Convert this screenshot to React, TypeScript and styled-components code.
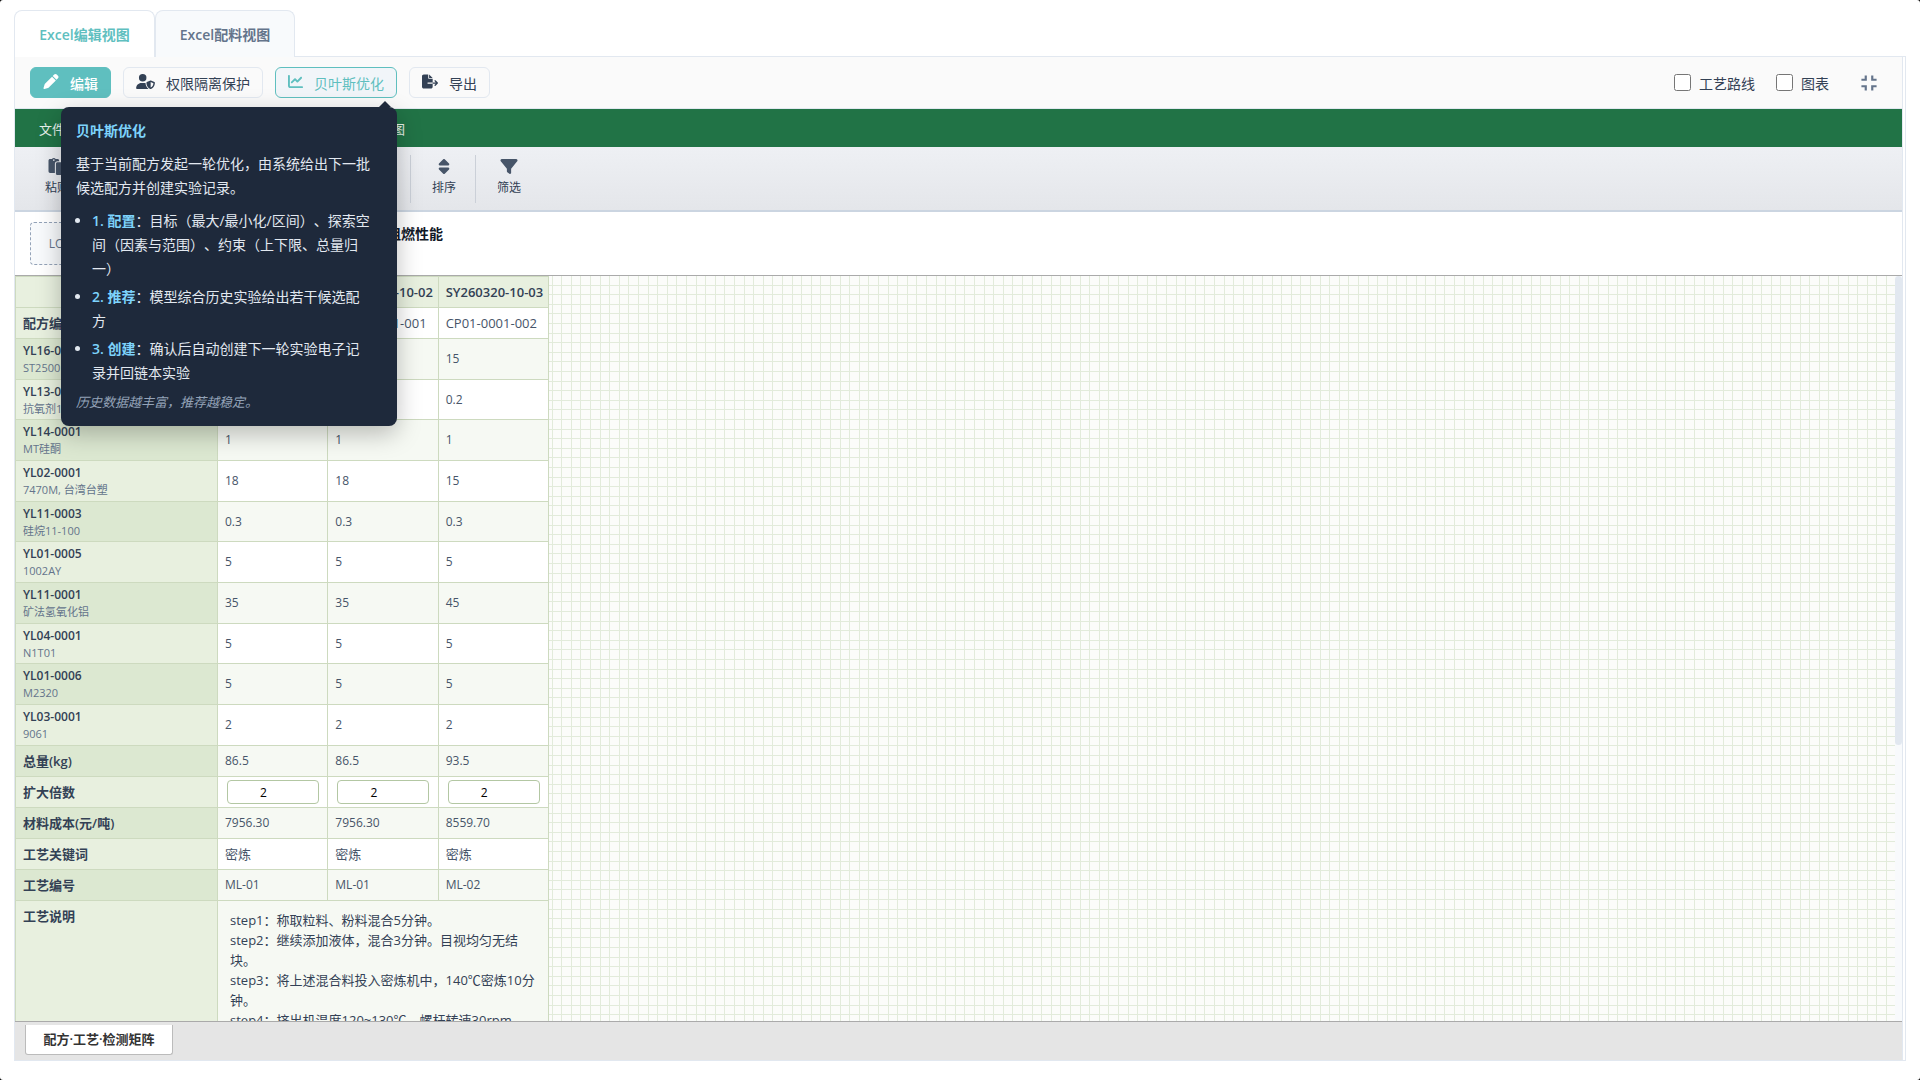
import React, { useState } from 'react';
import styled, { createGlobalStyle, css } from 'styled-components';
import {
  FaAlignCenter,
  FaAlignLeft,
  FaBold,
  FaChartLine,
  FaCopy,
  FaFileExport,
  FaFilter,
  FaItalic,
  FaPaste,
  FaPen,
  FaScissors,
  FaSort,
  FaUserShield,
} from 'react-icons/fa6';
import { MdFullscreenExit } from 'react-icons/md';

const GlobalStyle = createGlobalStyle`
  * {
    box-sizing: border-box;
  }
  html {
    background: #000;
  }
  body {
    margin: 0;
    font-family: 'Open Sans', 'Noto Sans CJK SC', sans-serif;
    font-size: 14px;
    color: #334155;
    text-spacing-trim: space-all;
  }
  button, input {
    font-family: inherit;
  }
`;

const Page = styled.div`
  display: flex;
  flex-direction: column;
  height: 100vh;
  padding: 10px 14px 19px;
  background: #fff;
  border-radius: 3px;
`;

const Tabs = styled.nav`
  display: flex;
  height: 47px;
  box-shadow: inset 0 -1px 0 #e2e8f0;
`;

const Tab = styled.button<{ $active?: boolean }>`
  width: 140px;
  border: 1px solid #e2e8f0;
  border-bottom: none;
  border-radius: 8px 8px 0 0;
  background: ${({ $active }) => ($active ? '#fff' : '#f8fafc')};
  color: ${({ $active }) => ($active ? '#5fbfbf' : '#64748b')};
  font-size: 14px;
  font-weight: 600;
  cursor: pointer;

  &:first-child {
    width: 141px;
  }
`;

const Frame = styled.div`
  flex: 1;
  min-height: 0;
  display: flex;
  padding-right: 2px;
  border: 1px solid #e2e8f0;
  border-top: none;
`;

const Panel = styled.main`
  flex: 1;
  min-width: 0;
  display: flex;
  flex-direction: column;
  border-right: 1px solid #e2e8f0;
`;

const Toolbar = styled.div`
  display: flex;
  align-items: center;
  gap: 12px;
  height: 52px;
  padding: 0 15px;
  background: #fafafa;
  border-bottom: 1px solid #e2e8f0;
`;

const ToolButton = styled.button<{ $variant?: 'primary' | 'active'; $icon: number }>`
  display: flex;
  align-items: center;
  gap: 11px;
  height: 31px;
  padding: 0 12px;
  border: 1px solid #e2e8f0;
  border-radius: 6px;
  background: #fafafa;
  color: #334155;
  font-size: 14px;
  cursor: pointer;

  svg {
    width: ${({ $icon }) => $icon}px;
    height: 15px;
    margin-bottom: 2px;
  }

  ${({ $variant }) =>
    $variant === 'primary' &&
    css`
      background: #5fbfbf;
      border-color: #5fbfbf;
      color: #fff;
      font-weight: 500;
    `}

  ${({ $variant }) =>
    $variant === 'active' &&
    css`
      background: #f1f5f9;
      border-color: #5fbfbf;
      color: #5fbfbf;
    `}
`;

const TipAnchor = styled.div`
  position: relative;
`;

const Tip = styled.div`
  position: absolute;
  top: 40px;
  right: 0;
  z-index: 10;
  width: 336px;
  padding: 12px 15px;
  border-radius: 8px;
  background: #1e293b;
  color: #e2e8f0;
  font-size: 14px;
  line-height: 24px;
  box-shadow: 0 8px 24px rgba(0, 0, 0, 0.25);

  &::before {
    content: '';
    position: absolute;
    top: -6px;
    right: 6px;
    border: 6px solid transparent;
    border-top: none;
    border-bottom-color: #1e293b;
  }

  strong {
    color: #7dd3fc;
    font-weight: 600;
  }
`;

const TipTitle = styled.h4`
  margin: 0 0 9px;
  color: #7dd3fc;
  font-size: 14px;
  font-weight: 700;
`;

const TipText = styled.p`
  margin: 0;
`;

const TipList = styled.ul`
  margin: 9px 0 5px;
  padding: 0 10px 0 16px;

  li + li {
    margin-top: 4px;
  }
`;

const TipNote = styled.em`
  color: #94a3b8;
  font-size: 13px;
`;

const Options = styled.div`
  display: flex;
  align-items: center;
  gap: 21px;
  margin-left: auto;
`;

const Option = styled.label`
  display: flex;
  align-items: center;
  gap: 8px;

  input {
    width: 17px;
    height: 17px;
    margin: 0;
  }
`;

const IconButton = styled.button`
  display: flex;
  padding: 4px 5px 4px 6px;
  border: none;
  background: none;
  color: #64748b;
  font-size: 26px;
  cursor: pointer;
`;

const MenuBar = styled.div`
  display: flex;
  align-items: center;
  gap: 42px;
  height: 38px;
  padding: 0 24px;
  background: #217346;
`;

const MenuItem = styled.button`
  padding: 0;
  border: none;
  background: none;
  color: #e8f1ec;
  font-size: 13px;
  cursor: pointer;
`;

const Ribbon = styled.div`
  display: flex;
  align-items: center;
  height: 65px;
  padding: 0 9px;
  background: linear-gradient(#eef0f4, #e4e6ea);
  border-bottom: 2px solid #cbd5e1;
`;

const RibbonGroup = styled.div`
  display: flex;
  height: 48px;
  padding: 0 7px 0 9px;

  &:not(:last-child) {
    border-right: 1px solid #cbd0d8;
  }
`;

const RibbonItem = styled.button`
  display: flex;
  flex-direction: column;
  align-items: center;
  gap: 4px;
  width: 48px;
  padding: 3px 0 0;
  border: none;
  background: none;
  color: #334155;
  font-size: 12px;
  line-height: 18px;
  white-space: nowrap;
  cursor: pointer;

  svg {
    width: 18px;
    height: 17px;
    color: #475569;
  }
`;

const SheetHead = styled.header`
  display: flex;
  gap: 20px;
  height: 64px;
  padding: 10px 15px;
  border-bottom: 1px solid #aaa;
`;

const Logo = styled.div`
  display: flex;
  align-items: center;
  justify-content: center;
  width: 71px;
  height: 43px;
  border: 1px dashed #94a3b8;
  border-radius: 4px;
  background: #f8fafc;
  color: #64748b;
  font-size: 12px;
`;

const SheetTitle = styled.h1`
  margin: 0;
  color: #111827;
  font-size: 14px;
  font-weight: 600;
  line-height: 24px;
`;

const SheetArea = styled.div`
  flex: 1;
  min-height: 0;
  display: flex;
`;

const lines =
  'transparent 0 9px, #e2ebdb 9px 10px, transparent 10px 18px, #e2ebdb 18px 19px, transparent 19px 28px, #e2ebdb 28px 29px, transparent 29px 37px, #e2ebdb 37px 38px, transparent 38px 47px, #e2ebdb 47px 48px';

const Sheet = styled.div`
  flex: 1;
  min-width: 0;
  overflow-y: auto;
  scrollbar-width: none;
  background:
    repeating-linear-gradient(90deg, ${lines}),
    repeating-linear-gradient(180deg, ${lines}),
    #fbfcfa;
`;

const ScrollTrack = styled.div`
  width: 7px;
  background: #f8fafc;
`;

const ScrollThumb = styled.div`
  height: 63%;
  border-radius: 4px;
  background: #e2e8f0;
`;

const Matrix = styled.table`
  width: 534px;
  table-layout: fixed;
  border-collapse: collapse;
  background: #fff;
  font-size: 12px;
  line-height: 18px;

  th, td {
    height: 31px;
    padding: 0 7px;
    border: 1px solid #cddabf;
    text-align: left;
  }

  thead th {
    background: #e8f0df;
    font-size: 13px;
    font-weight: 600;
    white-space: nowrap;
  }

  td {
    color: #475569;
  }
`;

const Row = styled.tr<{ $shade?: boolean; $height: number }>`
  height: ${({ $height }) => $height}px;
  background: ${({ $shade }) => ($shade ? '#f6f9f3' : '#fff')};

  th {
    background: ${({ $shade }) => ($shade ? '#dce8d1' : '#e8f0df')};
    font-size: 13px;
    font-weight: 600;
  }
`;

const Code = styled.div`
  font-size: 12px;
  line-height: 18px;
`;

const Sub = styled.div`
  color: #64748b;
  font-size: 11px;
  font-weight: 400;
  line-height: 16px;
`;

const Word = styled.span`
  font-size: 13px;
`;

const ScaleInput = styled.input`
  display: block;
  width: 92px;
  height: 24px;
  margin: 0 0 0 2px;
  padding: 0 4px 0 0;
  border: 1px solid #b3c7a3;
  border-radius: 4px;
  background: #fff;
  color: #000;
  font-size: 12px;
  text-align: center;
`;

const StepHead = styled.th`
  && {
    padding-top: 6px;
    vertical-align: top;
  }
`;

const StepCell = styled.td`
  && {
    padding: 9px 10px 9px 12px;
    background: #f6f9f3;
    color: #334155;
    font-size: 13px;
    line-height: 20px;
    vertical-align: top;
  }
`;

const SheetBar = styled.footer`
  display: flex;
  align-items: flex-start;
  height: 39px;
  padding: 3px 10px;
  background: #e5e5e5;
  border-top: 1px solid #aaa;
`;

const SheetTab = styled.button`
  width: 148px;
  height: 30px;
  padding: 0 0 2px;
  border: 1px solid #bbb;
  border-top: none;
  border-radius: 0 0 3px 3px;
  background: #fff;
  color: #333;
  font-size: 13px;
  font-weight: 600;
`;

const experiments = ['SY260320-10-01', 'SY260320-10-02', 'SY260320-10-03'];

const recipes = ['CP01-0001-001', 'CP01-0001-001', 'CP01-0001-002'];

const materials = [
  { code: 'YL16-0001', name: 'ST2500', values: ['15', '15', '15'] },
  { code: 'YL13-0001', name: '抗氧剂1010', values: ['0.2', '0.2', '0.2'] },
  { code: 'YL14-0001', name: 'MT硅酮', values: ['1', '1', '1'] },
  { code: 'YL02-0001', name: '7470M, 台湾台塑', values: ['18', '18', '15'] },
  { code: 'YL11-0003', name: '硅烷11-100', values: ['0.3', '0.3', '0.3'] },
  { code: 'YL01-0005', name: '1002AY', values: ['5', '5', '5'] },
  { code: 'YL11-0001', name: '矿法氢氧化铝', values: ['35', '35', '45'] },
  { code: 'YL04-0001', name: 'N1T01', values: ['5', '5', '5'] },
  { code: 'YL01-0006', name: 'M2320', values: ['5', '5', '5'] },
  { code: 'YL03-0001', name: '9061', values: ['2', '2', '2'] },
];

const steps = [
  'step1：称取粒料、粉料混合5分钟。',
  'step2：继续添加液体，混合3分钟。目视均匀无结块。',
  'step3：将上述混合料投入密炼机中，140℃密炼10分钟。',
  'step4：挤出机温度120~130℃，螺杆转速30rpm。',
];

const menus = ['文件', '开始', '插入', '公式', '数据', '视图'];

const ribbon = [
  [
    { icon: <FaPaste />, label: '粘贴' },
    { icon: <FaScissors />, label: '剪切' },
    { icon: <FaCopy />, label: '复制' },
  ],
  [
    { icon: <FaBold />, label: '加粗' },
    { icon: <FaItalic />, label: '斜体' },
  ],
  [
    { icon: <FaAlignLeft />, label: '左对齐' },
    { icon: <FaAlignCenter />, label: '居中' },
  ],
  [{ icon: <FaSort />, label: '排序' }],
  [{ icon: <FaFilter />, label: '筛选' }],
];

const BayesTip = () => (
  <Tip role="tooltip">
    <TipTitle>贝叶斯优化</TipTitle>
    <TipText>基于当前配方发起一轮优化，由系统给出下一批候选配方并创建实验记录。</TipText>
    <TipList>
      <li>
        <strong>1. 配置</strong>：目标（最大/最小化/区间）、探索空间（因素与范围）、约束（上下限、总量归一）
      </li>
      <li>
        <strong>2. 推荐</strong>：模型综合历史实验给出若干候选配方
      </li>
      <li>
        <strong>3. 创建</strong>：确认后自动创建下一轮实验电子记录并回链本实验
      </li>
    </TipList>
    <TipNote>历史数据越丰富，推荐越稳定。</TipNote>
  </Tip>
);

const RecipeTable = () => {
  const [scales, setScales] = useState([2, 2, 2]);

  const changeScale = (index: number, value: string) => {
    setScales(scales.map((s, i) => (i === index ? Number(value) : s)));
  };

  return (
    <Matrix>
      <colgroup>
        <col width={202} />
        <col />
        <col />
        <col />
      </colgroup>
      <thead>
        <tr>
          <th />
          {experiments.map((e) => (
            <th key={e}>{e}</th>
          ))}
        </tr>
      </thead>
      <tbody>
        <Row $height={31}>
          <th>配方编号</th>
          {recipes.map((r, i) => (
            <td key={i}>
              <Word>{r}</Word>
            </td>
          ))}
        </Row>
        {materials.map((m, i) => (
          <Row key={m.code} $shade={i % 2 === 0} $height={i % 3 === 1 ? 40 : 41}>
            <th>
              <Code>{m.code}</Code>
              <Sub>{m.name}</Sub>
            </th>
            {m.values.map((v, j) => (
              <td key={j}>{v}</td>
            ))}
          </Row>
        ))}
        <Row $shade $height={31}>
          <th>总量(kg)</th>
          <td>86.5</td>
          <td>86.5</td>
          <td>93.5</td>
        </Row>
        <Row $height={31}>
          <th>扩大倍数</th>
          {scales.map((s, i) => (
            <td key={i}>
              <ScaleInput
                type="number"
                aria-label={`扩大倍数 ${experiments[i]}`}
                value={s}
                onChange={(e) => changeScale(i, e.target.value)}
              />
            </td>
          ))}
        </Row>
        <Row $shade $height={31}>
          <th>材料成本(元/吨)</th>
          <td>7956.30</td>
          <td>7956.30</td>
          <td>8559.70</td>
        </Row>
        <Row $height={31}>
          <th>工艺关键词</th>
          {experiments.map((e) => (
            <td key={e}>
              <Word>密炼</Word>
            </td>
          ))}
        </Row>
        <Row $shade $height={31}>
          <th>工艺编号</th>
          <td>ML-01</td>
          <td>ML-01</td>
          <td>ML-02</td>
        </Row>
        <Row $height={31}>
          <StepHead>工艺说明</StepHead>
          <StepCell colSpan={3}>
            {steps.map((s) => (
              <div key={s}>{s}</div>
            ))}
          </StepCell>
        </Row>
      </tbody>
    </Matrix>
  );
};

const App = () => {
  const [tab, setTab] = useState('edit');
  const [showRoute, setShowRoute] = useState(false);
  const [showChart, setShowChart] = useState(false);

  return (
    <>
      <GlobalStyle />
      <Page>
        <Tabs>
          <Tab $active={tab === 'edit'} onClick={() => setTab('edit')}>
            Excel编辑视图
          </Tab>
          <Tab $active={tab === 'batch'} onClick={() => setTab('batch')}>
            Excel配料视图
          </Tab>
        </Tabs>
        <Frame>
          <Panel>
            <Toolbar>
              <ToolButton $variant="primary" $icon={16}>
                <FaPen />
                编辑
              </ToolButton>
              <ToolButton $icon={19}>
                <FaUserShield />
                权限隔离保护
              </ToolButton>
              <TipAnchor>
                <ToolButton $variant="active" $icon={15}>
                  <FaChartLine />
                  贝叶斯优化
                </ToolButton>
                <BayesTip />
              </TipAnchor>
              <ToolButton $icon={16}>
                <FaFileExport />
                导出
              </ToolButton>
              <Options>
                <Option>
                  <input type="checkbox" checked={showRoute} onChange={() => setShowRoute(!showRoute)} />
                  工艺路线
                </Option>
                <Option>
                  <input type="checkbox" checked={showChart} onChange={() => setShowChart(!showChart)} />
                  图表
                </Option>
                <IconButton aria-label="退出全屏">
                  <MdFullscreenExit />
                </IconButton>
              </Options>
            </Toolbar>
            <MenuBar>
              {menus.map((m) => (
                <MenuItem key={m}>{m}</MenuItem>
              ))}
            </MenuBar>
            <Ribbon>
              {ribbon.map((group, i) => (
                <RibbonGroup key={i}>
                  {group.map((item) => (
                    <RibbonItem key={item.label}>
                      {item.icon}
                      {item.label}
                    </RibbonItem>
                  ))}
                </RibbonGroup>
              ))}
            </Ribbon>
            <SheetHead>
              <Logo>LOGO</Logo>
              <SheetTitle>实验名称：低烟无卤聚烯烃电缆料配方优化阻燃性能</SheetTitle>
            </SheetHead>
            <SheetArea>
              <Sheet>
                <RecipeTable />
              </Sheet>
              <ScrollTrack aria-hidden="true">
                <ScrollThumb />
              </ScrollTrack>
            </SheetArea>
            <SheetBar>
              <SheetTab>配方·工艺·检测矩阵</SheetTab>
            </SheetBar>
          </Panel>
        </Frame>
      </Page>
    </>
  );
};

export default App;
